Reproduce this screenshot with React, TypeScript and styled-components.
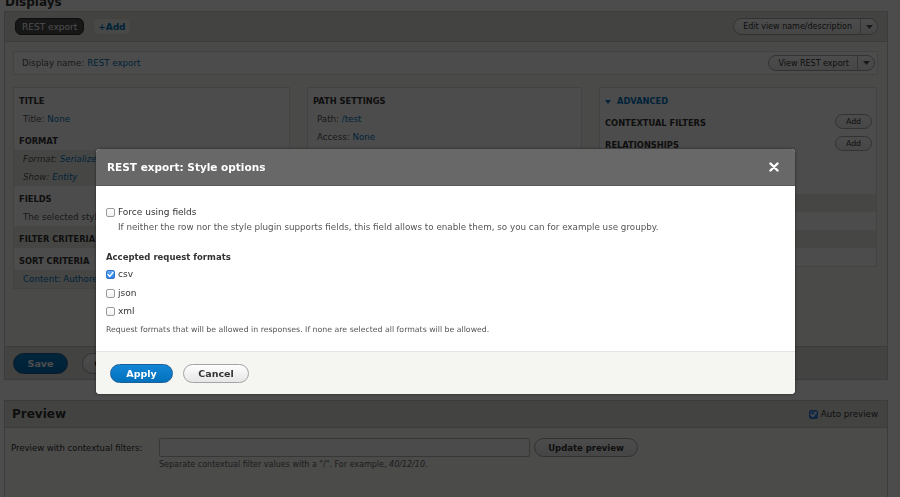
import styled, { createGlobalStyle } from "styled-components";

const text = "#333";
const muted = "#666";
const link = "#0074bd";
const bar = "#e1e2dc";
const rule = "#c8c8c8";
const band = "#ecece8";

const GlobalStyle = createGlobalStyle`
  * { box-sizing: border-box; }
  html, body { margin: 0; padding: 0; background: #fff; overflow: hidden; }
  body {
    font-family: "DejaVu Sans", Verdana, sans-serif;
    font-size: 8.7px;
    color: ${text};
  }
`;

/* ---------- page underneath ---------- */

const Page = styled.div`
  width: 884px;
  margin: -5px 0 0 4px;
`;

const PageTitle = styled.h2`
  margin: 0 0 2px 1px;
  font-size: 12px;
  line-height: 14px;
  font-weight: bold;
  color: ${text};
`;

const Displays = styled.div`
  border: 1px solid ${rule};
  background: #f7f7f5;
`;

const TabBar = styled.div`
  height: 30px;
  background: ${bar};
  border-bottom: 1px solid ${rule};
  display: flex;
  align-items: center;
  justify-content: space-between;
  padding: 0 9px 0 10px;
`;

const Tabs = styled.div`
  display: flex;
  align-items: center;
  gap: 9px;
`;

const Tab = styled.span<{ $active?: boolean }>`
  height: 17px;
  line-height: 16px;
  padding: 0 ${(p) => (p.$active ? "6px" : "4px")};
  border-radius: 6px;
  font-size: 9px;
  font-weight: ${(p) => (p.$active ? "normal" : "bold")};
  background: ${(p) => (p.$active ? "#4d4d4d" : "#f2f2ee")};
  color: ${(p) => (p.$active ? "#fff" : link)};
  border: ${(p) => (p.$active ? "1px solid #2d2d2d" : "1px solid #dcdcd6")};
`;

const DropButton = styled.div<{ $height?: number }>`
  display: flex;
  height: ${(p) => p.$height ?? 17}px;
  border: 1px solid #a8a8a8;
  border-radius: 9px;
  background: linear-gradient(#ffffff, #ebebeb);
  overflow: hidden;
`;

const DropMain = styled.span`
  display: flex;
  align-items: center;
  padding: 0 8px 0 9px;
  font-size: 8px;
  color: ${text};
  border-right: 1px solid #b5b5b5;
`;

const DropArrow = styled.span`
  width: 16px;
  display: flex;
  align-items: center;
  justify-content: center;
`;

const Content = styled.div`
  padding: 9px 9px 10px 8px;
`;

const NameBar = styled.div`
  height: 24px;
  display: flex;
  align-items: center;
  justify-content: space-between;
  padding: 0 2px 0 8px;
  background: #fff;
  border: 1px solid #e2e2e2;
`;

const Label = styled.span`
  color: #555;
`;

const Link = styled.span`
  color: ${link};
`;

const Columns = styled.div`
  margin-top: 12px;
  height: 249px;
  display: grid;
  grid-template-columns: 277px 275px 278px;
  column-gap: 17px;
  align-items: start;
`;

const Bucket = styled.div<{ $fill?: boolean }>`
  align-self: ${(p) => (p.$fill ? "stretch" : "start")};
  background: #fff;
  border: 1px solid #e0e0e0;
`;

const BucketTitle = styled.div<{ $band?: boolean; $link?: boolean }>`
  height: 22px;
  padding: 8px 4px 0 5px;
  display: flex;
  align-items: flex-start;
  justify-content: space-between;
  font-size: 8.3px;
  line-height: 10px;
  font-weight: bold;
  text-transform: uppercase;
  color: ${(p) => (p.$link ? link : text)};
  background: ${(p) => (p.$band ? band : "transparent")};
`;

const Setting = styled.div<{ $band?: boolean; $italic?: boolean }>`
  height: 18px;
  display: flex;
  align-items: center;
  padding: 0 5px 0 9px;
  white-space: nowrap;
  overflow: hidden;
  line-height: 11px;
  font-style: ${(p) => (p.$italic ? "italic" : "normal")};
  background: ${(p) => (p.$band ? band : "transparent")};
  color: #555;
`;

const AddButton = styled.span`
  margin-top: -4px;
  width: 37px;
  height: 15px;
  display: flex;
  align-items: center;
  justify-content: center;
  border: 1px solid #a8a8a8;
  border-radius: 8px;
  background: linear-gradient(#fff, #ececec);
  font-size: 7.8px;
  font-weight: normal;
  text-transform: none;
  color: ${text};
`;

const Caret = styled.svg`
  margin-right: 6px;
`;

const ActionBar = styled.div`
  height: 33px;
  background: ${bar};
  border-top: 1px solid ${rule};
  display: flex;
  align-items: center;
  gap: 14px;
  padding: 0 8px;
`;

const PillButton = styled.span<{ $primary?: boolean; $width: number }>`
  width: ${(p) => p.$width}px;
  height: 21px;
  display: flex;
  align-items: center;
  justify-content: center;
  border-radius: 11px;
  font-size: 9.5px;
  font-weight: bold;
  color: ${(p) => (p.$primary ? "#fff" : text)};
  background: ${(p) =>
    p.$primary ? "linear-gradient(#0a7fcb, #0070b8)" : "linear-gradient(#fff, #e8e8e8)"};
  border: 1px solid ${(p) => (p.$primary ? "#1e5c90" : "#a6a6a6")};
`;

const PreviewBox = styled.div`
  margin-top: 20px;
  border: 1px solid ${rule};
  background: #fafaf8;
  height: 120px;
`;

const PreviewHead = styled.div`
  height: 27px;
  background: ${bar};
  border-bottom: 1px solid ${rule};
  display: flex;
  align-items: center;
  justify-content: space-between;
  padding: 0 9px 0 7px;
`;

const PreviewTitle = styled.span`
  font-size: 12px;
  font-weight: bold;
  color: ${text};
`;

const AutoPreview = styled.label`
  display: flex;
  align-items: center;
  gap: 3px;
  font-size: 8.7px;
  color: ${text};
`;

const PreviewBody = styled.div`
  padding: 10px 6px 0 6px;
`;

const FieldRow = styled.div`
  display: flex;
  align-items: center;
  gap: 4px;
`;

const FieldLabel = styled.span`
  width: 144px;
  font-size: 8.5px;
  color: ${text};
`;

const TextInput = styled.div`
  width: 371px;
  height: 19px;
  border: 1px solid #b9b9b9;
  border-radius: 2px;
  background: #fcfcfc;
`;

const SmallButton = styled.span`
  width: 104px;
  height: 19px;
  display: flex;
  align-items: center;
  justify-content: center;
  border: 1px solid #a6a6a6;
  border-radius: 10px;
  background: linear-gradient(#fff, #e8e8e8);
  font-size: 8.5px;
  font-weight: bold;
  color: ${text};
`;

const FieldHelp = styled.div`
  margin: 3px 0 0 148px;
  font-size: 8px;
  color: ${muted};
`;

/* ---------- dialog ---------- */

const Overlay = styled.div`
  position: fixed;
  inset: 0;
  background: rgba(0, 0, 0, 0.7);
`;

const Dialog = styled.div`
  position: fixed;
  left: 96px;
  top: 149px;
  width: 699px;
  border-radius: 4px;
  overflow: hidden;
  background: #fff;
  box-shadow: 0 0 3px rgba(0, 0, 0, 0.5);
`;

const TitleBar = styled.div`
  height: 37px;
  background: #686868;
  border-bottom: 1px solid #5c5c5c;
  display: flex;
  align-items: center;
  justify-content: space-between;
  padding: 0 16px 0 11px;
`;

const DialogTitle = styled.span`
  font-size: 10.5px;
  font-weight: bold;
  color: #fff;
`;

const DialogBody = styled.div`
  padding: 20px 10px 15px 10px;
`;

const CheckRow = styled.label<{ $gap?: number }>`
  display: flex;
  align-items: center;
  height: 12px;
  margin-top: ${(p) => p.$gap ?? 0}px;
  gap: 3px;
  font-size: 9px;
  color: ${text};
`;

const Box = styled.span<{ $checked?: boolean }>`
  width: 9px;
  height: 9px;
  display: inline-flex;
  align-items: center;
  justify-content: center;
  border-radius: 2px;
  border: 1px solid ${(p) => (p.$checked ? "#2c72c8" : "#9b9b9b")};
  background: ${(p) =>
    p.$checked ? "linear-gradient(#62acf6, #2f80e2)" : "linear-gradient(#fff, #f1f1f1)"};
`;

const Description = styled.div<{ $indent?: boolean; $gap: number; $size: number }>`
  margin-top: ${(p) => p.$gap}px;
  padding-left: ${(p) => (p.$indent ? 12 : 0)}px;
  line-height: 12px;
  font-size: ${(p) => p.$size}px;
  color: #555;
`;

const GroupLabel = styled.div`
  margin-top: 18px;
  line-height: 12px;
  font-size: 8.5px;
  font-weight: bold;
  color: ${text};
`;

const Footer = styled.div`
  height: 43px;
  background: #f5f5f2;
  border-top: 1px solid #e4e4e0;
  display: flex;
  align-items: center;
  gap: 10px;
  padding: 0 14px;
`;

const DialogButton = styled.span<{ $primary?: boolean; $width: number }>`
  width: ${(p) => p.$width}px;
  height: 19px;
  display: flex;
  align-items: center;
  justify-content: center;
  border-radius: 10px;
  font-size: 9.5px;
  font-weight: bold;
  color: ${(p) => (p.$primary ? "#fff" : text)};
  background: ${(p) =>
    p.$primary ? "linear-gradient(#1486d6, #0071bc)" : "linear-gradient(#fefefe, #e6e6e6)"};
  border: 1px solid ${(p) => (p.$primary ? "#1b5f98" : "#a4a4a4")};
`;

const Check = ({ checked }: { checked?: boolean }) => (
  <Box $checked={checked}>
    {checked && (
      <svg width="7" height="7" viewBox="0 0 7 7">
        <path d="M1 3.6 L2.8 5.4 L6 1.4" stroke="#fff" strokeWidth="1.4" fill="none" strokeLinecap="round" />
      </svg>
    )}
  </Box>
);

const Arrow = () => (
  <svg width="7" height="4" viewBox="0 0 7 4">
    <path d="M0 0 L7 0 L3.5 4 Z" fill="#555" />
  </svg>
);

const CloseIcon = () => (
  <svg width="10" height="10" viewBox="0 0 10 10">
    <path d="M1.5 1.5 L8.5 8.5 M8.5 1.5 L1.5 8.5" stroke="#fff" strokeWidth="2.4" strokeLinecap="round" />
  </svg>
);

export default function App() {
  return (
    <>
      <GlobalStyle />
      <Page>
        <PageTitle>Displays</PageTitle>
        <Displays>
          <TabBar>
            <Tabs>
              <Tab $active>REST export</Tab>
              <Tab>+Add</Tab>
            </Tabs>
            <DropButton>
              <DropMain>Edit view name/description</DropMain>
              <DropArrow>
                <Arrow />
              </DropArrow>
            </DropButton>
          </TabBar>
          <Content>
            <NameBar>
              <span>
                <Label>Display name: </Label>
                <Link>REST export</Link>
              </span>
              <DropButton $height={16}>
                <DropMain>View REST export</DropMain>
                <DropArrow>
                  <Arrow />
                </DropArrow>
              </DropButton>
            </NameBar>
            <Columns>
              <Bucket>
                <BucketTitle>Title</BucketTitle>
                <Setting>
                  Title:&nbsp;<Link>None</Link>
                </Setting>
                <BucketTitle>Format</BucketTitle>
                <Setting $band $italic>
                  Format:&nbsp;<Link>Serializer</Link>
                </Setting>
                <Setting $band $italic>
                  Show:&nbsp;<Link>Entity</Link>
                </Setting>
                <BucketTitle>Fields</BucketTitle>
                <Setting>The selected style</Setting>
                <BucketTitle $band>Filter criteria</BucketTitle>
                <BucketTitle>Sort criteria</BucketTitle>
                <Setting $band>
                  <Link>Content: Authored on</Link>
                </Setting>
              </Bucket>
              <Bucket $fill>
                <BucketTitle>Path settings</BucketTitle>
                <Setting>
                  Path:&nbsp;<Link>/test</Link>
                </Setting>
                <Setting>
                  Access:&nbsp;<Link>None</Link>
                </Setting>
              </Bucket>
              <Bucket>
                <BucketTitle $link>
                  <span>
                    <Caret width="6" height="4" viewBox="0 0 6 4">
                      <path d="M0 0 L6 0 L3 4 Z" fill={link} />
                    </Caret>
                    Advanced
                  </span>
                </BucketTitle>
                <BucketTitle>
                  Contextual filters
                  <AddButton>Add</AddButton>
                </BucketTitle>
                <BucketTitle>
                  Relationships
                  <AddButton>Add</AddButton>
                </BucketTitle>
                <BucketTitle />
                <Setting />
                <Setting $band />
                <Setting />
                <Setting $band />
                <Setting />
              </Bucket>
            </Columns>
          </Content>
          <ActionBar>
            <PillButton $primary $width={55}>
              Save
            </PillButton>
            <PillButton $width={60}>Cancel</PillButton>
          </ActionBar>
        </Displays>

        <PreviewBox>
          <PreviewHead>
            <PreviewTitle>Preview</PreviewTitle>
            <AutoPreview>
              <Check checked />
              Auto preview
            </AutoPreview>
          </PreviewHead>
          <PreviewBody>
            <FieldRow>
              <FieldLabel>Preview with contextual filters:</FieldLabel>
              <TextInput />
              <SmallButton>Update preview</SmallButton>
            </FieldRow>
            <FieldHelp>
              Separate contextual filter values with a "/". For example, <em>40/12/10</em>.
            </FieldHelp>
          </PreviewBody>
        </PreviewBox>
      </Page>

      <Overlay />
      <Dialog role="dialog">
        <TitleBar>
          <DialogTitle>REST export: Style options</DialogTitle>
          <CloseIcon />
        </TitleBar>
        <DialogBody>
          <CheckRow>
            <Check />
            Force using fields
          </CheckRow>
          <Description $indent $gap={3} $size={8.75}>
            If neither the row nor the style plugin supports fields, this field allows to enable them, so you can
            for example use groupby.
          </Description>
          <GroupLabel>Accepted request formats</GroupLabel>
          <CheckRow $gap={5}>
            <Check checked />
            csv
          </CheckRow>
          <CheckRow $gap={7}>
            <Check />
            json
          </CheckRow>
          <CheckRow $gap={6}>
            <Check />
            xml
          </CheckRow>
          <Description $gap={7} $size={7.8}>
            Request formats that will be allowed in responses. If none are selected all formats will be allowed.
          </Description>
        </DialogBody>
        <Footer>
          <DialogButton $primary $width={63}>
            Apply
          </DialogButton>
          <DialogButton $width={66}>Cancel</DialogButton>
        </Footer>
      </Dialog>
    </>
  );
}
